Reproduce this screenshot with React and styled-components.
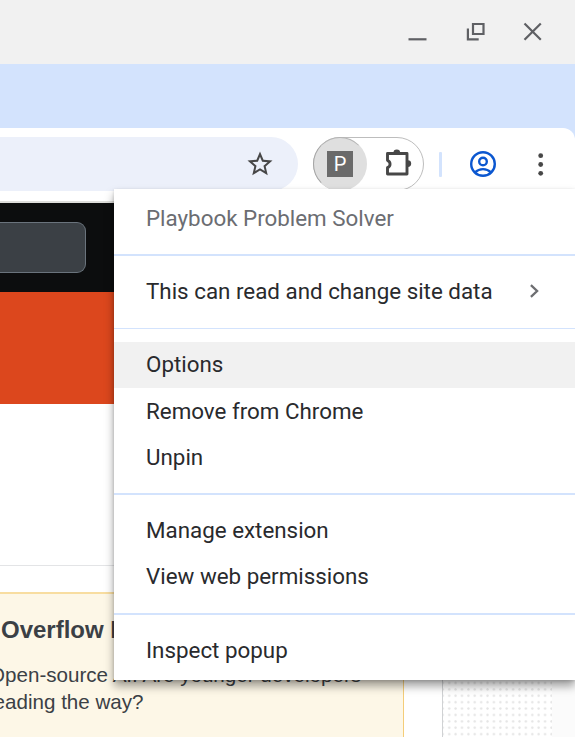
import React from "react";
import styled, { createGlobalStyle } from "styled-components";

const GlobalStyle = createGlobalStyle`
  * { box-sizing: border-box; }
  body { margin: 0; background: #fff; overflow: hidden; }
`;

const Screen = styled.div`
  position: relative;
  width: 575px;
  height: 737px;
  overflow: hidden;
  display: flex;
  flex-direction: column;
  background: #fff;
  font-family: Roboto, "Liberation Sans", sans-serif;
`;

const TitleBar = styled.header`
  height: 64px;
  flex: none;
  display: flex;
  align-items: center;
  justify-content: flex-end;
  gap: 34px;
  padding-right: 30px;
  background: #f1f1f1;
`;

const WindowIcon = styled.svg`
  display: block;
  width: 24px;
  height: 24px;
  fill: none;
  stroke: #5f6064;
  stroke-width: 2.2;
`;

const TabStrip = styled.div`
  height: 76px;
  margin-bottom: -12px;
  flex: none;
  background: #d3e3fd;
`;

const Toolbar = styled.div`
  height: 75px;
  flex: none;
  display: flex;
  align-items: flex-start;
  padding-top: 9px;
  background: #fff;
  border-top-right-radius: 12px;
  border-bottom: 2px solid #dededb;
`;

const AddressBar = styled.div`
  width: 298px;
  height: 54px;
  display: flex;
  align-items: center;
  justify-content: flex-end;
  padding-right: 23px;
  border-radius: 0 27px 27px 0;
  background: #ecf0fa;
`;

const ToolbarIcon = styled.svg`
  display: block;
  flex: none;
  width: ${(p) => p.$size}px;
  height: ${(p) => p.$size}px;
  color: ${(p) => p.$color || "#474747"};
`;

const ExtensionGroup = styled.div`
  width: 111px;
  height: 54px;
  margin-left: 15px;
  display: flex;
  align-items: center;
  border: 1.5px solid #bdbdbd;
  border-radius: 27px;
`;

const ExtensionButton = styled.div`
  width: 54px;
  height: 54px;
  margin: 0 17px 0 -1px;
  display: grid;
  place-items: center;
  border: 1px solid transparent;
  border-left-color: #a6a6a6;
  border-top-color: #b4b4b4;
  border-radius: 27px;
  background: #dfdfdf;
`;

const LetterTile = styled.span`
  width: 26px;
  height: 26px;
  display: grid;
  place-items: center;
  background: #6a6a6a;
  color: #fff;
  font-size: 20px;
  line-height: 26px;
`;

const ToolbarDivider = styled.span`
  width: 3px;
  height: 25px;
  margin: 15px 27px 0 15px;
  border-radius: 1px;
  background: #d3e3fd;
`;

const ToolbarActions = styled.div`
  height: 54px;
  display: flex;
  align-items: center;
  gap: 29px;
`;

const SiteNav = styled.div`
  height: 89px;
  flex: none;
  padding-top: 19px;
  background: #0c0d0e;
`;

const SearchField = styled.div`
  width: 86px;
  height: 51px;
  border: 1px solid #6a737c;
  border-left: 0;
  border-radius: 0 9px 9px 0;
  background: #3b4045;
`;

const Banner = styled.div`
  height: 112px;
  flex: none;
  background: #dc471d;
`;

const PageBody = styled.main`
  flex: 1;
  min-height: 0;
  display: flex;
`;

const Content = styled.div`
  width: 443px;
  padding-top: 161px;
  border-right: 1px solid #d0d2d4;
`;

const ContentRule = styled.div`
  height: 1px;
  margin-bottom: 26px;
  background: #e3e4e6;
`;

const Notice = styled.aside`
  width: 404px;
  height: 160px;
  padding-top: 21px;
  border: 1px solid #f4cd79;
  border-top-width: 2px;
  border-top-color: #f8dda0;
  border-left: 0;
  background: #fdf7e7;
  color: #3b4045;
  font-family: "Liberation Sans", sans-serif;
  white-space: nowrap;
`;

const NoticeTitle = styled.h2`
  margin: 0 0 17px 1px;
  font-size: 24px;
  line-height: 29px;
`;

const NoticeText = styled.p`
  margin: 0 0 0 -11px;
  font-size: 20.6px;
  line-height: 27px;
`;

const DotPanel = styled.div`
  width: 109px;
  background: radial-gradient(circle, #e4e4e4 0.8px, transparent 1.5px) 3px 1px / 6.4px 6.4px #fff;
`;

const PageGutter = styled.div`
  flex: 1;
  background: #fbfbfb;
`;

const Menu = styled.div`
  position: absolute;
  top: 189px;
  left: 114px;
  width: 461px;
  height: 491px;
  padding-top: 6px;
  background: #fff;
  box-shadow: 0 6px 9px rgba(0, 0, 0, 0.38), 0 1px 3px rgba(0, 0, 0, 0.14);
`;

const MenuItem = styled.div`
  height: 46px;
  display: flex;
  align-items: center;
  justify-content: space-between;
  padding: 0 28px ${(p) => (p.$raised ? 2 : 0)}px 32px;
  background: ${(p) => (p.$active ? "#f1f1f1" : "transparent")};
  color: ${(p) => (p.$muted ? "#6b6d72" : "#292a2d")};
  font-size: 22.37px;
  white-space: nowrap;
`;

const MenuDivider = styled.div`
  height: ${(p) => (p.$thin ? 1 : 2)}px;
  margin: 13px 0;
  background: #d3e3fd;
`;

function Chevron() {
  return (
    <svg width="26" height="24" viewBox="0 0 26 24" fill="none" stroke="#6d6e71" strokeWidth="2.3">
      <path d="M9.9 6.2l6.200 5.800-6.200 5.800" />
    </svg>
  );
}

export default function App() {
  return (
    <>
      <GlobalStyle />
      <Screen>
        <TitleBar>
          <WindowIcon viewBox="0 0 24 24"><path d="M3.500 19.300h18" /></WindowIcon>
          <WindowIcon viewBox="0 0 24 24">
            <path d="M10 4h10.500v10h-10.500zM4.900 8.500v10.900h10.800" />
          </WindowIcon>
          <WindowIcon viewBox="0 0 24 24"><path d="M3.500 3.500l16.300 16.300M19.800 3.500l-16.300 16.300" /></WindowIcon>
        </TitleBar>
        <TabStrip />
        <Toolbar>
          <AddressBar>
            <ToolbarIcon $size={30} viewBox="0 0 24 24" fill="currentColor">
              <path d="m22 9.240-7.190-.62L12 2 9.190 8.630 2 9.240l5.460 4.730L5.820 21 12 17.270 18.180 21l-1.630-7.030L22 9.240zM12 15.400l-3.760 2.270 1-4.280-3.320-2.880 4.380-.38L12 6.100l1.710 4.040 4.380.38-3.320 2.880 1 4.280L12 15.400z" />
            </ToolbarIcon>
          </AddressBar>
          <ExtensionGroup>
            <ExtensionButton><LetterTile>P</LetterTile></ExtensionButton>
            <ToolbarIcon $size={30} viewBox="0 0 30 30">
              <path d="M3.500 4.500h19.500v20.500h-19.500v-6.300c3.400-1.500 3.400-5.900 0-7.400z" fill="none" stroke="currentColor" strokeWidth="2.900" strokeLinejoin="round" />
              <path d="M9.400 3.800a3.400 3.400 0 0 1 6.800 0zM23.800 11.200a3.400 3.400 0 0 1 0 6.800z" fill="currentColor" />
            </ToolbarIcon>
          </ExtensionGroup>
          <ToolbarDivider />
          <ToolbarActions>
            <ToolbarIcon $size={28} $color="#0b57d0" viewBox="0 0 28 28" fill="none" stroke="currentColor" strokeWidth="2.400">
              <circle cx="14" cy="14" r="11.800" />
              <circle cx="14" cy="11.500" r="3.800" />
              <path d="M6 22.300c4.500-4.300 11.500-4.300 16 0" />
            </ToolbarIcon>
            <ToolbarIcon $size={30} viewBox="0 0 30 30" fill="currentColor">
              <circle cx="14.700" cy="6.700" r="2.400" />
              <circle cx="14.700" cy="15.500" r="2.400" />
              <circle cx="14.700" cy="24.300" r="2.400" />
            </ToolbarIcon>
          </ToolbarActions>
        </Toolbar>
        <SiteNav><SearchField /></SiteNav>
        <Banner />
        <PageBody>
          <Content>
            <ContentRule />
            <Notice>
              <NoticeTitle>Overflow Blog</NoticeTitle>
              <NoticeText>Open-source AI: Are younger developers<br />leading the way?</NoticeText>
            </Notice>
          </Content>
          <DotPanel />
          <PageGutter />
        </PageBody>
        <Menu>
          <MenuItem $muted>Playbook Problem Solver</MenuItem>
          <MenuDivider />
          <MenuItem $raised>This can read and change site data<Chevron /></MenuItem>
          <MenuDivider $thin />
          <MenuItem $active $raised>Options</MenuItem>
          <MenuItem>Remove from Chrome</MenuItem>
          <MenuItem>Unpin</MenuItem>
          <MenuDivider />
          <MenuItem $raised>Manage extension</MenuItem>
          <MenuItem $raised>View web permissions</MenuItem>
          <MenuDivider />
          <MenuItem $raised>Inspect popup</MenuItem>
        </Menu>
      </Screen>
    </>
  );
}
